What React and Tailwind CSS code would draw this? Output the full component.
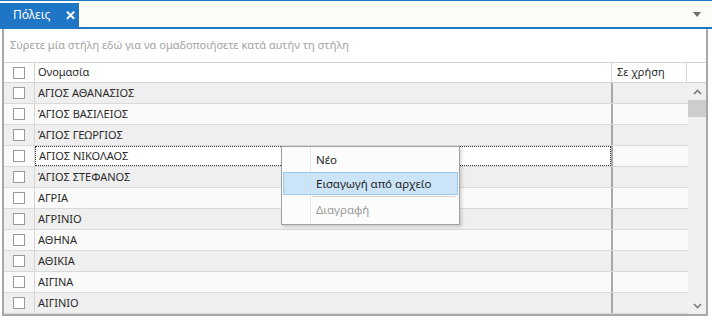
import React from "react";

const rows = [
  "ΑΓΙΟΣ ΑΘΑΝΑΣΙΟΣ",
  "ΆΓΙΟΣ ΒΑΣΙΛΕΙΟΣ",
  "ΆΓΙΟΣ ΓΕΩΡΓΙΟΣ",
  "ΑΓΙΟΣ ΝΙΚΟΛΑΟΣ",
  "ΆΓΙΟΣ ΣΤΕΦΑΝΟΣ",
  "ΑΓΡΙΑ",
  "ΑΓΡΙΝΙΟ",
  "ΑΘΗΝΑ",
  "ΑΘΙΚΙΑ",
  "ΑΙΓΙΝΑ",
  "ΑΙΓΙΝΙΟ",
];

function Check() {
  return <div className="w-[12px] h-[12px] border border-[#9a9a9a] bg-white" />;
}

export default function App() {
  return (
    <div className="w-[712px] h-[320px] bg-white relative overflow-hidden font-['Noto_Sans',sans-serif] text-[11px] text-[#2a2a2a]">
      {/* tab strip */}
      <div className="h-[29px] border-t border-b-2 border-[#1f76c6] bg-[#fdfdf8] flex items-end justify-between">
        <div className="h-[24px] w-[79px] bg-[#1f76c6] text-white flex items-center pl-[13px] gap-[15px] text-[12px]">
          <span>Πόλεις</span>
          <span className="font-bold text-[13px] leading-none">✕</span>
        </div>
        <div className="h-full flex items-center pr-[11px]">
          <svg width="8" height="5" viewBox="0 0 8 5"><path d="M0 0 L8 0 L4 5 Z" fill="#6e6e6e" /></svg>
        </div>
      </div>

      {/* grid panel */}
      <div className="ml-[2px] w-[706px] h-[287px] border-l-2 border-r-2 border-b-2 border-[#a8a8a8] flex flex-col">
        <div className="h-[33px] flex items-center pl-[6px] text-[#a3a3a3] shrink-0">
          Σύρετε μία στήλη εδώ για να ομαδοποιήσετε κατά αυτήν τη στήλη
        </div>
        {/* header */}
        <div className="h-[21px] flex border-t border-b border-[#d4d4d4] bg-white shrink-0">
          <div className="w-[31px] flex items-center justify-center border-r border-[#d4d4d4]"><Check /></div>
          <div className="w-[577px] flex items-center pl-[3px] border-r border-[#d4d4d4]">Ονομασία</div>
          <div className="w-[75px] flex items-center pl-[5px] border-r border-[#d4d4d4]">Σε χρήση</div>
          <div className="flex-1" />
        </div>
        {/* body */}
        <div className="flex flex-1 min-h-0">
          <div className="flex flex-col">
            {rows.map((r, i) => (
              <div key={i} className={`h-[21px] flex border-b border-[#d9d9d9] ${i % 2 === 0 ? "bg-[#efefef]" : "bg-[#fafafa]"}`}>
                <div className="w-[31px] flex items-center justify-center border-r border-[#d4d4d4]"><Check /></div>
                <div className={`w-[576px] flex items-center pl-[3px] ${i === 3 ? "border border-dotted border-[#333] bg-white" : ""}`}>{r}</div>
                <div className="w-[2px] bg-[#a8a8a8]" />
                <div className="w-[75px]" />
              </div>
            ))}
          </div>
          <div className="flex-1 bg-[#f0f0f0] flex flex-col items-center">
            <div className="h-[17px] w-full flex items-center justify-center">
              <svg width="9" height="6" viewBox="0 0 9 6"><path d="M1 5 L4.5 1.5 L8 5" stroke="#7a7a7a" strokeWidth="1.6" fill="none" /></svg>
            </div>
            <div className="h-[17px] w-full bg-[#cdcdcd]" />
            <div className="flex-1" />
            <div className="h-[17px] w-full flex items-center justify-center">
              <svg width="9" height="6" viewBox="0 0 9 6"><path d="M1 1 L4.5 4.5 L8 1" stroke="#7a7a7a" strokeWidth="1.6" fill="none" /></svg>
            </div>
          </div>
        </div>
      </div>

      {/* context menu */}
      <div className="absolute left-[281px] top-[146px] w-[179px] h-[79px] bg-[#fcfcfc] border border-[#a0a0a0] shadow-[2px_2px_3px_rgba(0,0,0,0.15)] py-[1px] px-[1px] flex flex-col text-[11.5px]">
        <div className="absolute left-[28px] top-0 bottom-0 w-px bg-[#e6e6e6]" />
        <div className="h-[24px] flex items-center pl-[33px] text-[#1e1e1e]">Νέο</div>
        <div className="h-[23px] flex items-center pl-[32px] bg-[#cce4f7] border border-[#99c9ef] text-[#1e1e1e] relative">Εισαγωγή από αρχείο</div>
        <div className="h-[3px] flex items-center pl-[29px] pr-[3px]"><div className="h-px w-full bg-[#d7d7d7]" /></div>
        <div className="h-[24px] flex items-center pl-[33px] text-[#9a9a9a]">Διαγραφή</div>
      </div>
    </div>
  );
}
